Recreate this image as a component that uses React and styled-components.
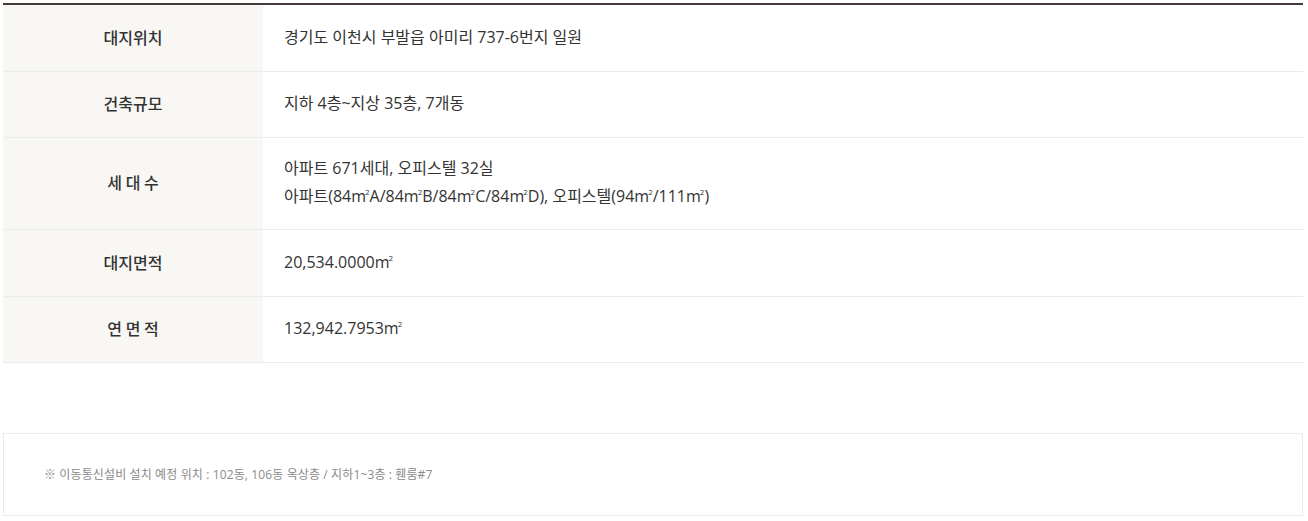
import React from "react";
import styled, { createGlobalStyle } from "styled-components";

const Global = createGlobalStyle`
  html, body { margin: 0; padding: 0; background: #fff; }
  body { font-family: "Open Sans", "Noto Sans CJK KR", sans-serif; color: #333; }
`;

const Page = styled.div`
  padding: 3px 5px 5px 3px;
  width: 1300px;
`;

const Table = styled.table`
  width: 100%;
  border-collapse: collapse;
  border-top: 2px solid #433b39;
`;

const Row = styled.tr`
  border-bottom: 1px solid #ebebeb;
`;

const Head = styled.th`
  width: 260px;
  box-sizing: border-box;
  background: #f8f7f3;
  font-family: "Noto Sans CJK KR", sans-serif;
  font-size: 16px;
  font-weight: 500;
  color: #333;
  text-align: center;
  height: ${(p) => p.$h}px;
  padding: 0 0 2px;
  line-height: 26px;
`;

const Cell = styled.td`
  padding: 0 0 2px 21px;
  font-size: 16px;
  font-weight: 400;
  color: #333;
  line-height: 28px;
`;

const Sup = styled.sup`
  font-size: 8px;
  vertical-align: 7px;
  line-height: 0;
  margin-left: -1px;
`;

const Note = styled.div`
  margin-top: 70px;
  border: 1px solid #ebebeb;
  height: 81px;
  display: flex;
  align-items: center;
  padding-left: 40px;
  font-size: 12px;
  color: #8a8a8a;
  letter-spacing: 0.01em;
`;

const M2 = () => (
  <>
    m<Sup>2</Sup>
  </>
);

const rows = [
  { h: 67, label: "대지위치", value: <>경기도 이천시 부발읍 아미리 737-6번지 일원</> },
  { h: 66, label: "건축규모", value: <>지하 4층~지상 35층, 7개동</> },
  {
    h: 92,
    label: "세 대 수",
    value: (
      <>
        아파트 671세대, 오피스텔 32실
        <br />
        아파트(84<M2 />A/84<M2 />B/84<M2 />C/84<M2 />D), 오피스텔(94<M2 />/111<M2 />)
      </>
    ),
  },
  { h: 67, label: "대지면적", value: <>20,534.0000<M2 /></> },
  { h: 66, label: "연 면 적", value: <>132,942.7953<M2 /></> },
];

export default function App() {
  return (
    <Page>
      <Global />
      <Table>
        <tbody>
          {rows.map((r) => (
            <Row key={r.label}>
              <Head $h={r.h}>{r.label}</Head>
              <Cell>{r.value}</Cell>
            </Row>
          ))}
        </tbody>
      </Table>
      <Note>※ 이동통신설비 설치 예정 위치 : 102동, 106동 옥상층 / 지하1~3층 : 휀룸#7</Note>
    </Page>
  );
}
